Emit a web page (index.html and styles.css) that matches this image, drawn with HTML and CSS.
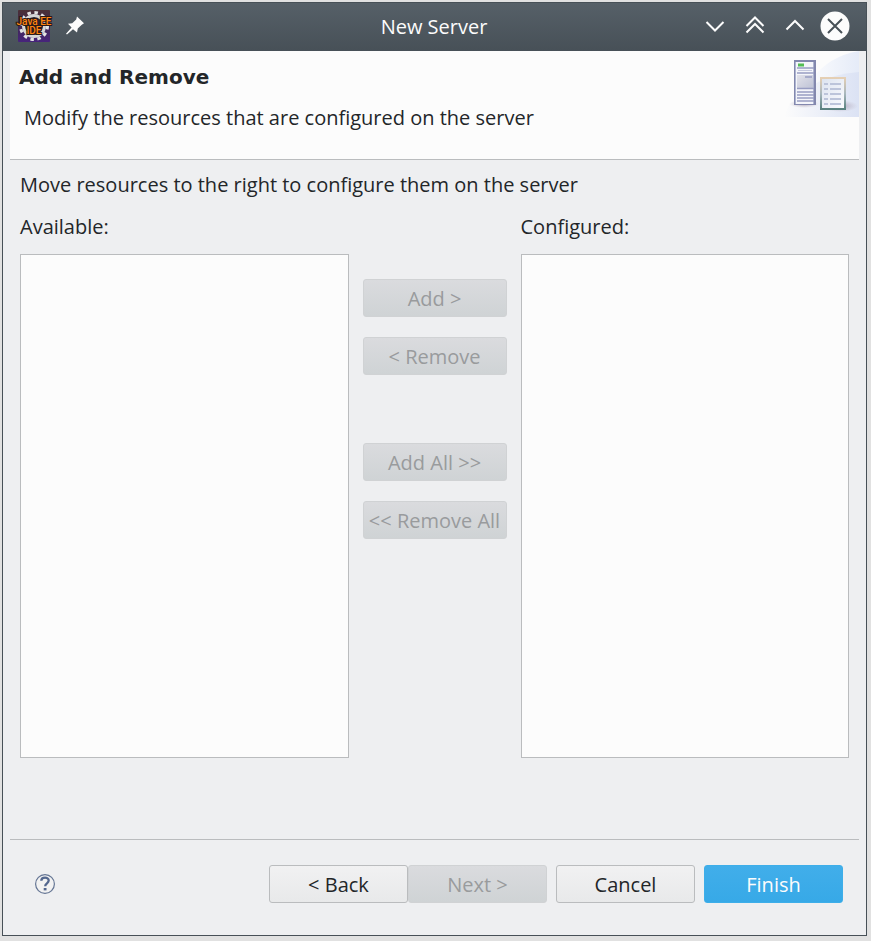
FILE: index.html
```html
<!DOCTYPE html>
<html lang="en">
<head>
<meta charset="utf-8">
<title>New Server</title>
<link rel="stylesheet" href="styles.css">
</head>
<body>
<main class="window">
  <header class="titlebar">
    <div class="titlebar-side">
      <svg class="app-icon" viewBox="0 0 32 32" width="32" height="32" aria-hidden="true">
        <defs><linearGradient id="app" x1="0" y1="0" x2="0" y2="1"><stop offset="0" stop-color="#4b3036"/><stop offset=".5" stop-color="#3f2853"/><stop offset="1" stop-color="#47247c"/></linearGradient></defs>
        <rect width="32" height="32" rx="1" fill="url(#app)"/>
        <circle cx="16" cy="16" r="13.500" fill="none" stroke="#e4e4e4" stroke-width="3" stroke-dasharray="3.500 3.570"/>
        <circle cx="16" cy="16" r="10.500" fill="#2b2530" stroke="#d6d6d6" stroke-width="3"/>
        <g class="app-text" text-anchor="middle"><text x="16" y="15">Java EE</text><text x="16" y="24">IDE</text></g>
      </svg>
      <button class="icon-button" type="button" aria-label="Keep on all desktops">
        <svg viewBox="0 0 20 20" width="20" height="20"><path d="M12 .5 19 7.200 16.500 9 12.800 12.600 12 16.500 8 13.200 2 18.600 1 17.800 6.600 11.600 3 7.800 7.200 7.300 11.200 3.600Z" fill="#fcfcfc"/></svg>
      </button>
    </div>
    <h1 class="window-title">New Server</h1>
    <div class="titlebar-side titlebar-controls">
      <button class="icon-button" type="button" aria-label="Minimize"><svg viewBox="0 0 30 30" width="30" height="30"><path d="m6.500 11 8.500 8.500 8.500-8.500"/></svg></button>
      <button class="icon-button" type="button" aria-label="Keep above"><svg viewBox="0 0 30 30" width="30" height="30"><path d="m6.500 15 8.500-8.500 8.500 8.500M6.500 21.500 15 13l8.500 8.500"/></svg></button>
      <button class="icon-button" type="button" aria-label="Maximize"><svg viewBox="0 0 30 30" width="30" height="30"><path d="m6.500 18.500 8.500-8.500 8.500 8.500"/></svg></button>
      <button class="icon-button" type="button" aria-label="Close"><svg viewBox="0 0 30 30" width="30" height="30"><circle cx="15" cy="15" r="14.500" class="close-disc"/><path class="close-cross" d="m8 8 14 14M22 8 8 22"/></svg></button>
    </div>
  </header>

  <section class="banner">
    <div class="banner-text">
      <h2 class="banner-title">Add and Remove</h2>
      <p class="banner-note">Modify the resources that are configured on the server</p>
    </div>
    <svg class="banner-art" viewBox="0 0 75 66" width="75" height="66" aria-hidden="true">
      <defs>
        <linearGradient id="sky" x1="0" x2="1" y1="0" y2="0"><stop offset="0" stop-color="#fcfcfc"/><stop offset="1" stop-color="#dbe2f4"/></linearGradient>
        <linearGradient id="arc" x1="0" x2="1" y1="0" y2="0"><stop offset="0" stop-color="#fafbfd"/><stop offset="1" stop-color="#e5ebf8"/></linearGradient>
        <linearGradient id="case" x1="0" x2="1" y1="0" y2="1"><stop offset="0" stop-color="#e2e2ea"/><stop offset="1" stop-color="#bfc3d6"/></linearGradient>
        <linearGradient id="edge" x1="0" x2="0" y1="0" y2="1"><stop offset="0" stop-color="#e5cfb4"/><stop offset=".5" stop-color="#a9b7bd"/><stop offset="1" stop-color="#5b8280"/></linearGradient>
        <linearGradient id="paper" x1="0" x2="1" y1="0" y2="1"><stop offset="0" stop-color="#dce3f0"/><stop offset="1" stop-color="#fcfcfe"/></linearGradient>
        <radialGradient id="shade"><stop offset="0" stop-color="#8f849b" stop-opacity=".7"/><stop offset="1" stop-color="#b8abb9" stop-opacity="0"/></radialGradient>
      </defs>
      <path d="M28 28Q45 5 75 0V66H28Z" fill="url(#arc)"/>
      <path d="M0 66 5 54Q30 24 75 21V66Z" fill="url(#sky)"/>
      <ellipse cx="20" cy="53" rx="15" ry="4" fill="url(#shade)"/>
      <ellipse cx="56" cy="55" rx="18" ry="6" fill="url(#shade)"/>
      <path d="M10 9h22v45H10Z" fill="#8388ae"/>
      <path d="M11 11h19v42H11Z" fill="#aeb5d0"/>
      <path d="M12 11h17v42H12Z" fill="#f4f5fa"/>
      <path d="M13 24h16v13H13Z" fill="url(#case)"/>
      <path d="M13 17h17M13 22h17M21 26h7M13 37.500h17M13 41h17M13 44h17M13 47h17M13 50h17" stroke="#989dc2" stroke-width="1.400"/>
      <path d="M14 19.500h14" stroke="#c5c9df"/>
      <path d="M14 12.500h6v3h-6Z" fill="#53bd54"/>
      <path d="M37 27h24v31H37Z" fill="url(#paper)" stroke="url(#edge)" stroke-width="2"/>
      <path d="M40 33h4m2 0h11M40 38h4m2 0h11M40 43h4m2 0h11M40 48h4m2 0h11M40 53h4m2 0h11" stroke="#bcc4da" stroke-width="2"/>
    </svg>
  </section>

  <section class="content">
    <p class="hint">Move resources to the right to configure them on the server</p>
    <div class="transfer">
      <div class="list-column">
        <label for="available">Available:</label>
        <select id="available" multiple></select>
      </div>
      <div class="actions">
        <div class="action-pair">
          <button class="button" type="button" disabled>Add &gt;</button>
          <button class="button" type="button" disabled>&lt; Remove</button>
        </div>
        <div class="action-pair">
          <button class="button" type="button" disabled>Add All &gt;&gt;</button>
          <button class="button" type="button" disabled>&lt;&lt; Remove All</button>
        </div>
      </div>
      <div class="list-column">
        <label for="configured">Configured:</label>
        <select id="configured" multiple></select>
      </div>
    </div>
  </section>

  <footer class="footer">
    <button class="icon-button" type="button" aria-label="Help">
      <svg class="help" viewBox="0 0 20 20" width="20" height="20"><circle cx="10" cy="10" r="9.400" fill="#f2f2f2" stroke="#647594" stroke-width="1.200"/><path d="M6.300 6.800C6.300 2.700 13.700 2.700 13.700 6.600c0 2.700-3.500 2.700-3.500 5.600" fill="none" stroke="#53678e" stroke-width="2.300"/><path d="M8.700 14h2.800v2.400H8.700Z" fill="#53678e"/></svg>
    </button>
    <div class="footer-buttons">
      <div class="nav-pair">
        <button class="button" type="button">&lt; Back</button>
        <button class="button" type="button" disabled>Next &gt;</button>
      </div>
      <button class="button" type="button">Cancel</button>
      <button class="button button-primary" type="button">Finish</button>
    </div>
  </footer>
</main>
</body>
</html>
```
FILE: styles.css
```css
* { box-sizing: border-box; }

body {
  margin: 0;
  min-height: 100vh;
  display: flex;
  padding: 2px 4px 5px 2px;
  background: #e1e1e1;
  color: #232629;
  font: 20px/28px "Open Sans", "Noto Sans", sans-serif;
}

h1, h2, p { margin: 0; }

.window {
  flex: 1;
  display: flex;
  flex-direction: column;
  border: 1px solid #475057;
  background: #eeeff1;
}

.titlebar {
  display: grid;
  grid-template-columns: 1fr auto 1fr;
  align-items: center;
  height: 48px;
  padding: 0 16px 2px 15px;
  background: linear-gradient(#566068, #475057);
  color: #fcfcfc;
}

.titlebar-side {
  display: flex;
  align-items: center;
  gap: 15px;
}

.titlebar-controls {
  justify-content: flex-end;
  gap: 10px;
}

.titlebar-controls path {
  fill: none;
  stroke: #fcfcfc;
  stroke-width: 2;
}

.close-disc { fill: #fcfcfc; }

.titlebar-controls .close-cross { stroke: #475057; }

.window-title {
  padding-top: 2px;
  font-size: 20px;
  font-weight: 400;
}

.app-icon { overflow: visible; }

.app-text {
  fill: #ff8412;
  stroke: #2b1a16;
  stroke-width: 2px;
  paint-order: stroke;
  font: 500 10px/10px Roboto, sans-serif;
}

.icon-button {
  display: flex;
  padding: 0;
  border: 0;
  background: none;
}

.banner {
  display: flex;
  justify-content: space-between;
  min-height: 109px;
  margin: 0 7px;
  border-bottom: 1px solid #babcbe;
  background: #fcfcfc;
}

.banner-text { padding: 12px 9px; }

.banner-title {
  font: bold 20px/28px "DejaVu Sans", sans-serif;
}

.banner-note { padding: 13px 5px; }

.content {
  flex: 1;
  display: flex;
  flex-direction: column;
  gap: 14px;
  margin: 0 7px;
  padding: 11px 10px 81px;
  border-bottom: 1px solid #babcbe;
}

.transfer {
  flex: 1;
  display: grid;
  grid-template-columns: 1fr 144px 1fr;
  gap: 14px;
}

.list-column {
  display: flex;
  flex-direction: column;
  gap: 13px;
}

.list-column select {
  flex: 1;
  width: 100%;
  border: 1px solid #babcbe;
  border-radius: 0;
  background: #fcfcfc;
}

.actions {
  display: flex;
  flex-direction: column;
  gap: 68px;
  padding-top: 66px;
}

.action-pair {
  display: flex;
  flex-direction: column;
  gap: 20px;
}

.button {
  height: 38px;
  padding: 2px 0 0;
  border: 1px solid #babcbe;
  border-radius: 3px;
  background: linear-gradient(#f1f1f2, #e8e9ea);
  color: #232629;
  font: inherit;
}

.button:disabled {
  border-color: #d0d2d4;
  background: linear-gradient(#dadbde, #cfd3d5);
  color: #999b9d;
}

.button-primary {
  border-color: #3daee9;
  background: linear-gradient(#41aeea, #37a9e7);
  color: #fcfcfc;
}

.footer {
  display: flex;
  justify-content: space-between;
  align-items: center;
  padding: 25px 23px 32px 32px;
}

.footer-buttons {
  display: flex;
  gap: 9px;
}

.footer-buttons .button { width: 139px; }

.nav-pair { display: flex; }
```
